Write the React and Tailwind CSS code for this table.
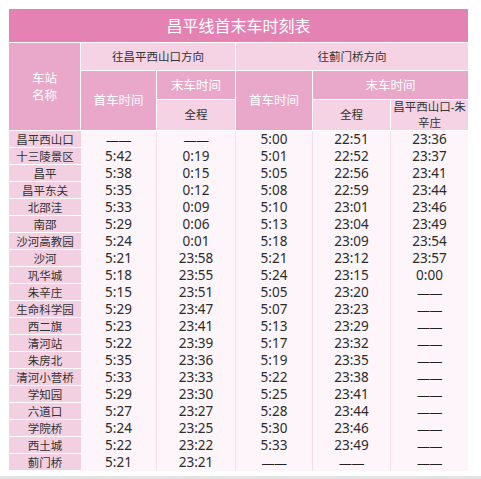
import React from 'react'

const DASH = '——'

const rows = [
  ['昌平西山口', DASH, DASH, '5:00', '22:51', '23:36'],
  ['十三陵景区', '5:42', '0:19', '5:01', '22:52', '23:37'],
  ['昌平', '5:38', '0:15', '5:05', '22:56', '23:41'],
  ['昌平东关', '5:35', '0:12', '5:08', '22:59', '23:44'],
  ['北邵洼', '5:33', '0:09', '5:10', '23:01', '23:46'],
  ['南邵', '5:29', '0:06', '5:13', '23:04', '23:49'],
  ['沙河高教园', '5:24', '0:01', '5:18', '23:09', '23:54'],
  ['沙河', '5:21', '23:58', '5:21', '23:12', '23:57'],
  ['巩华城', '5:18', '23:55', '5:24', '23:15', '0:00'],
  ['朱辛庄', '5:15', '23:51', '5:05', '23:20', DASH],
  ['生命科学园', '5:29', '23:47', '5:07', '23:23', DASH],
  ['西二旗', '5:23', '23:41', '5:13', '23:29', DASH],
  ['清河站', '5:22', '23:39', '5:17', '23:32', DASH],
  ['朱房北', '5:35', '23:36', '5:19', '23:35', DASH],
  ['清河小营桥', '5:33', '23:33', '5:22', '23:38', DASH],
  ['学知园', '5:29', '23:30', '5:25', '23:41', DASH],
  ['六道口', '5:27', '23:27', '5:28', '23:44', DASH],
  ['学院桥', '5:24', '23:25', '5:30', '23:46', DASH],
  ['西土城', '5:22', '23:22', '5:33', '23:49', DASH],
  ['蓟门桥', '5:21', '23:21', DASH, DASH, DASH],
]

const cols = 'grid-cols-[72px_76px_79px_77px_78px_77px]'

// dark pink header cell, white text
const Dark = ({ className = '', children }) => (
  <div
    className={`flex items-center justify-center bg-[#e9a7c9] text-white text-[12.5px] leading-[17px] border-r border-b border-white text-center ${className}`}
  >
    {children}
  </div>
)

// light pink header cell, dark text
const Light = ({ className = '', children }) => (
  <div
    className={`flex items-center justify-center bg-[#f5d3e5] text-[#333] text-[11.5px] leading-[16px] border-r border-b border-white text-center ${className}`}
  >
    {children}
  </div>
)

export default function App() {
  return (
    <div
      className="w-[481px] h-[479px] bg-white flex flex-col"
      style={{ fontFamily: '"Noto Sans", "Noto Sans CJK SC", sans-serif' }}
    >
      <div className="ml-[9px] mt-[9px] w-[459px]">
        {/* title */}
        <div className="h-[34px] bg-[#e482b4] text-white text-[16px] flex items-center justify-center border-b border-white">
          昌平线首末车时刻表
        </div>

        {/* header */}
        <div className={`grid ${cols} grid-rows-[28px_29px_31px]`}>
          <Dark className="row-span-3 flex-col">
            <span>车站</span>
            <span>名称</span>
          </Dark>
          <Light className="col-span-2">往昌平西山口方向</Light>
          <Light className="col-span-3 border-r-0">往蓟门桥方向</Light>
          <Dark className="row-span-2">首车时间</Dark>
          <Dark>末车时间</Dark>
          <Dark className="row-span-2">首车时间</Dark>
          <Dark className="col-span-2 border-r-0">末车时间</Dark>
          <Light>全程</Light>
          <Light>全程</Light>
          <Light className="border-r-0 px-[2px] leading-[15px]">昌平西山口-朱辛庄</Light>
        </div>

        {/* body */}
        <div className={`grid ${cols} auto-rows-[17px]`}>
          {rows.map((r) => (
            <React.Fragment key={r[0]}>
              <div className="bg-[#f2d0e2] border-b border-white flex items-center justify-center text-[11.5px] leading-[15px] text-[#333]">
                {r[0]}
              </div>
              {r.slice(1).map((v, i) => (
                <div
                  key={i}
                  className={`bg-[#fdf5f9] flex items-center justify-center text-[13.5px] leading-[15px] text-[#2b2b2b] ${i < 4 ? 'border-r border-[#f1e0e8]' : ''}`}
                >
                  {v === DASH ? (
                    <span className="text-[13px] leading-[14px] tracking-[-0.5px] text-[#222]">{v}</span>
                  ) : (
                    v
                  )}
                </div>
              ))}
            </React.Fragment>
          ))}
        </div>
      </div>
      <div className="mt-auto h-[3px] bg-[#e4e4e4]" />
    </div>
  )
}
